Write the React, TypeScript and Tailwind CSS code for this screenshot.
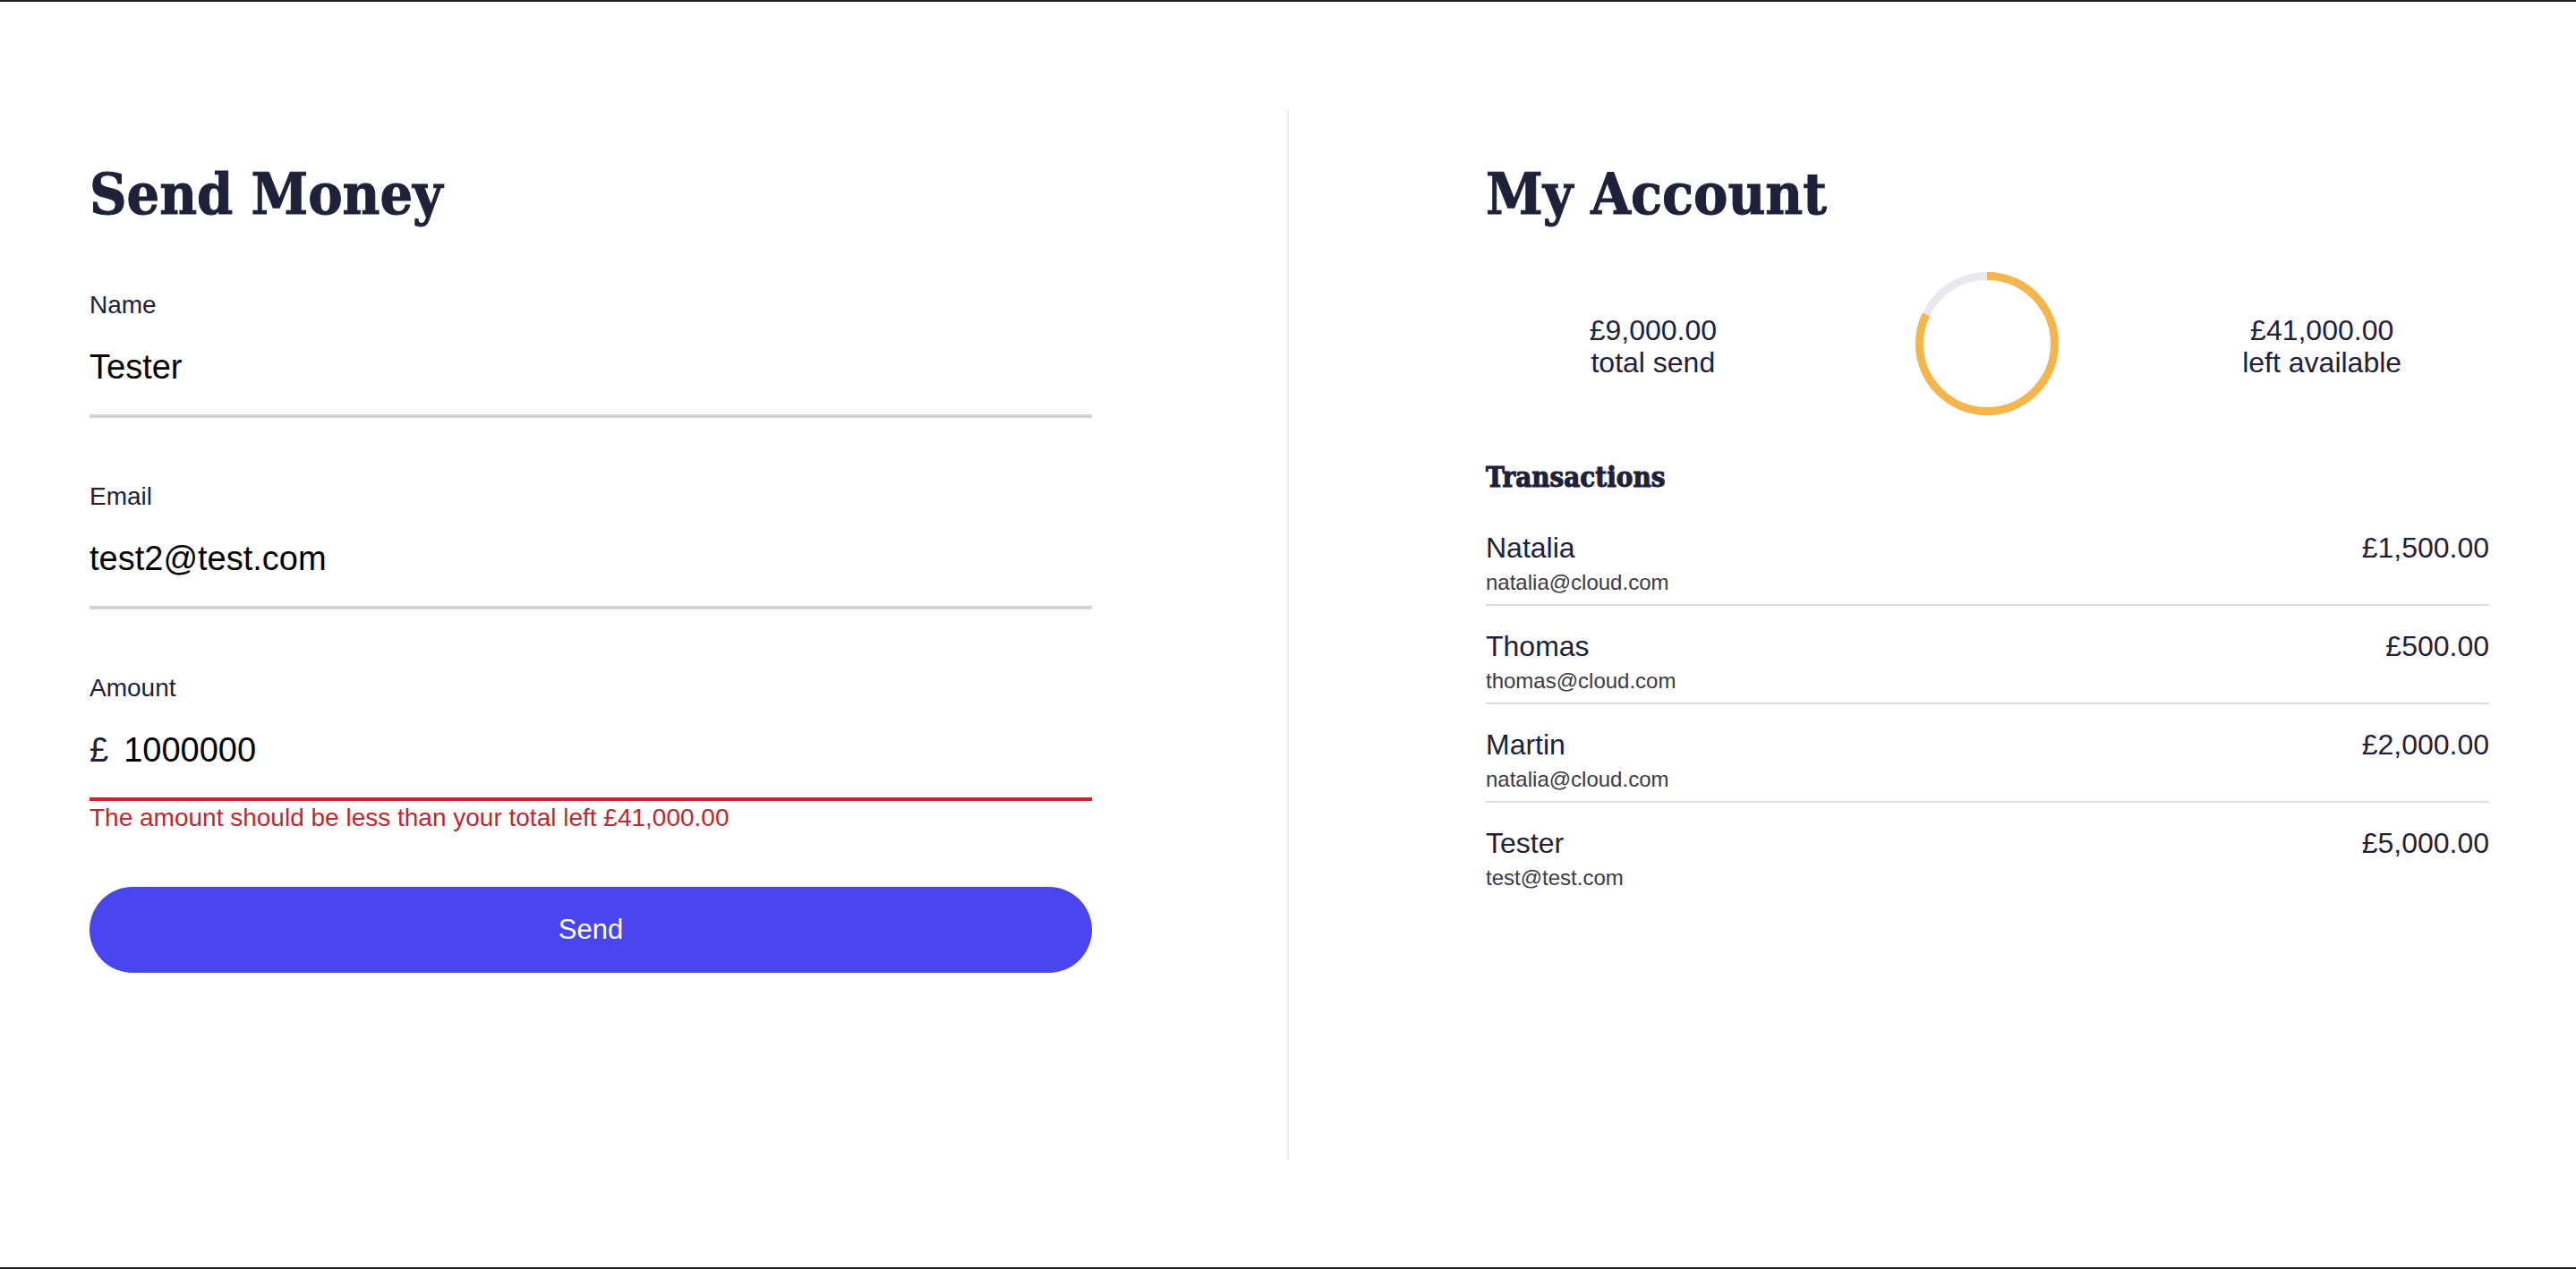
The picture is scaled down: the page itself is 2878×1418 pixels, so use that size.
import React from 'react'

const heading = "font-['DejaVu_Serif',serif] font-bold [font-stretch:condensed] [-webkit-text-stroke:1px_#1e2139] text-[#1e2139]"

const transactions = [
    { name: 'Natalia', email: 'natalia@cloud.com', amount: '£1,500.00' },
    { name: 'Thomas', email: 'thomas@cloud.com', amount: '£500.00' },
    { name: 'Martin', email: 'natalia@cloud.com', amount: '£2,000.00' },
    { name: 'Tester', email: 'test@test.com', amount: '£5,000.00' },
]

function Field({ label, value, prefix, error }: { label: string; value: string; prefix?: string; error?: string }) {
    return (
        <div>
            <label className='block text-[28px] leading-[32px] text-[#1e2139]'>{label}</label>
            <div className={'mt-[31px] pb-[31px] border-b-4 flex items-center ' + (error ? 'border-[#c1272d]' : 'border-[#d4d4d8]')}>
                {prefix && <span className='text-[38px] leading-[44px] text-[#1e2139] mr-[17px]'>{prefix}</span>}
                <input
                    readOnly
                    value={value}
                    className='block w-full h-[44px] p-0 text-[38px] text-black bg-transparent outline-none'
                />
            </div>
            {error && <p className='mt-[3px] text-[28px] leading-[32px] text-[#c1272d]'>{error}</p>}
        </div>
    )
}

function Donut({ sent, total }: { sent: number; total: number }) {
    const r = 75.5
    const c = 2 * Math.PI * r
    const left = (total - sent) / total
    return (
        <svg width='160' height='160' viewBox='0 0 160 160'>
            <circle cx='80' cy='80' r={r} fill='none' stroke='#e9e8ee' strokeWidth='9' />
            <circle
                cx='80'
                cy='80'
                r={r}
                fill='none'
                stroke='#f4b54b'
                strokeWidth='9'
                strokeDasharray={`${c * left} ${c}`}
                transform='rotate(-90 80 80)'
            />
        </svg>
    )
}

export default function App() {
    return (
        <div className="h-[1418px] w-full border-y-2 border-[#1f1f1f] bg-white font-['Liberation_Sans',Arial,sans-serif] overflow-hidden">
            <div className='flex items-start px-[100px] pt-[121px]'>
                {/* send money */}
                <div className='w-[1120px] shrink-0'>
                    <h1 className={heading + ' mt-[62px] text-[64px] leading-[63px]'}>Send Money</h1>
                    <div className='mt-[77px] flex flex-col gap-[72px]'>
                        <Field label='Name' value='Tester' />
                        <Field label='Email' value='test2@test.com' />
                    </div>
                    <div className='mt-[72px]'>
                        <Field
                            label='Amount'
                            value='1000000'
                            prefix='£'
                            error='The amount should be less than your total left £41,000.00'
                        />
                    </div>
                    <button className='mt-[61px] w-full h-[96px] rounded-full bg-[#4945f1] text-white text-[31px]'>
                        Send
                    </button>
                </div>

                <div className='ml-[218px] w-[2px] h-[1173px] bg-[#ececef] shrink-0'></div>

                {/* my account */}
                <div className='ml-[220px] w-[1121px] shrink-0'>
                    <h1 className={heading + ' mt-[62px] text-[64px] leading-[63px]'}>My Account</h1>
                    <div className='mt-[56px] grid grid-cols-3 items-center text-center text-[32px] leading-[36px] text-[#1e2139]'>
                        <div className='pt-[6px]'>
                            <p>£9,000.00</p>
                            <p>total send</p>
                        </div>
                        <div className='flex justify-center'>
                            <Donut sent={9000} total={50000} />
                        </div>
                        <div className='pt-[6px]'>
                            <p>£41,000.00</p>
                            <p>left available</p>
                        </div>
                    </div>
                    <h2 className={heading + ' mt-[49px] text-[31px] leading-[40px] [-webkit-text-stroke:0.6px_#1e2139]'}>Transactions</h2>
                    <ul className='mt-[14px]'>
                        {transactions.map((t, i) => (
                            <li
                                key={i}
                                className={'pt-[27px] pb-[10px] ' + (i < transactions.length - 1 ? 'border-b-2 border-[#dcdce0]' : '')}
                            >
                                <div className='flex justify-between text-[32px] leading-[36px] text-[#1e2139]'>
                                    <span>{t.name}</span>
                                    <span>{t.amount}</span>
                                </div>
                                <p className='mt-[7px] text-[24px] leading-[28px] text-[#3a3a44]'>{t.email}</p>
                            </li>
                        ))}
                    </ul>
                </div>
            </div>
        </div>
    )
}
